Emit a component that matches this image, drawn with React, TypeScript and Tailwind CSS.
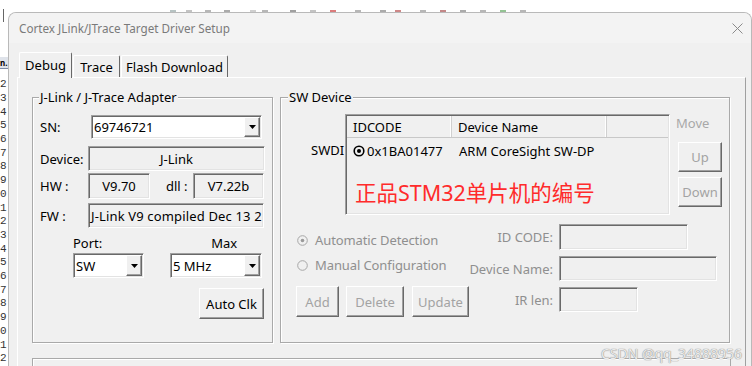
import React from "react";

const raised =
  "border border-t-white border-l-white border-r-[#696969] border-b-[#696969] shadow-[inset_-1px_-1px_0_#a0a0a0]";
const sunken =
  "border border-t-[#a0a0a0] border-l-[#a0a0a0] border-r-white border-b-white shadow-[inset_1px_1px_0_#696969,inset_-1px_-1px_0_#e3e3e3]";

function Arrow() {
  return (
    <svg width="7" height="4" viewBox="0 0 7 4">
      <polygon points="0,0 7,0 3.5,4" fill="#000" />
    </svg>
  );
}

function Combo({ value, w }: { value: string; w: string }) {
  return (
    <div className={`flex h-full ${w} bg-white ${sunken} p-[1px]`}>
      <div className="flex-1 flex items-center pl-[1px] whitespace-nowrap">{value}</div>
      <div className={`w-[16px] bg-[#f0f0f0] flex items-center justify-center ${raised}`}>
        <Arrow />
      </div>
    </div>
  );
}

function Field({ w, children, left }: { w: string; children?: React.ReactNode; left?: boolean }) {
  return (
    <div
      className={`h-full ${w} ${sunken} bg-[#f0f0f0] flex items-center overflow-hidden whitespace-nowrap ${
        left ? "pl-[2px]" : "justify-center"
      }`}
    >
      {children}
    </div>
  );
}

function Btn({ w, h, children, disabled }: { w: string; h: string; children: React.ReactNode; disabled?: boolean }) {
  return (
    <div
      className={`${w} ${h} ${raised} bg-[#f0f0f0] flex items-center justify-center ${
        disabled ? "text-[#a3a3a3]" : "text-black"
      }`}
    >
      {children}
    </div>
  );
}

function Radio({ checked, label }: { checked?: boolean; label: string }) {
  return (
    <div className="flex items-center h-[16px] text-[#8f8f8f]">
      <svg width="11" height="11" viewBox="0 0 11 11" className="ml-[1px]">
        <circle cx="5.5" cy="5.5" r="4.8" fill="#f0f0f0" stroke="#a6a6a6" strokeWidth="1" />
        {checked && <circle cx="5.5" cy="5.5" r="1.8" fill="#9a9a9a" />}
      </svg>
      <span className="ml-[7px] tracking-[-0.1px]">{label}</span>
    </div>
  );
}

function LeftStrip() {
  const digits = "234567890123456789012".split("");
  return (
    <div className="w-[8px] h-full shrink-0 flex flex-col overflow-hidden bg-white">
      <div className="h-[10px]" />
      <div className="ml-[3px] w-px h-[15px] bg-[#666]" />
      <div className="mt-[35px] h-[12px] bg-[#dfe3ea] border-b border-[#7d8aa6] text-[8px] font-bold leading-[11px] whitespace-nowrap">
        n.
      </div>
      <div className="mt-[9px] flex flex-col font-['Liberation_Mono',monospace] text-[11px] leading-[13.7px] text-[#333]">
        {digits.map((d, i) => (
          <span key={i}>{d}</span>
        ))}
      </div>
    </div>
  );
}

function TopStrip() {
  const marks = [
    [170, "#9aa"], [186, "#aaa"], [205, "#999"], [224, "#888"], [250, "#bbb"], [262, "#999"],
    [290, "#777"], [310, "#aaa"], [330, "#c44"], [355, "#999"], [380, "#888"], [395, "#b55"],
    [420, "#999"], [440, "#a55"], [460, "#888"], [480, "#999"], [500, "#6a6"], [520, "#999"],
  ] as const;
  return (
    <div className="h-[12px] shrink-0 bg-white">
      <svg width="744" height="12">
        {marks.map(([x, c], i) => (
          <rect key={i} x={x - 8} y={10} width={6} height={2} fill={c} opacity={0.7} />
        ))}
      </svg>
    </div>
  );
}

export default function App() {
  return (
    <div className="w-[752px] h-[366px] overflow-hidden bg-white flex font-['Noto_Sans',sans-serif] text-[13px] leading-[16px] text-black">
      <LeftStrip />
      <div className="flex flex-col w-[744px]">
        <TopStrip />
        <div className="relative flex-1 flex flex-col rounded-t-[8px] border border-b-0 border-[#b9b9b9] bg-[#f0f0f0] overflow-hidden">
          {/* title bar */}
          <div className="h-[30px] shrink-0 bg-[#f3f3f3] flex items-center justify-between pl-[10px] pr-[8px]">
            <span className="text-[11.7px] text-[#7a7a7a]">Cortex JLink/JTrace Target Driver Setup</span>
            <svg width="11" height="11" viewBox="0 0 11 11">
              <path d="M0.5 0.5 L10.5 10.5 M10.5 0.5 L0.5 10.5" stroke="#8a8a8a" strokeWidth="1" />
            </svg>
          </div>

          {/* tabs */}
          <div className="h-[34px] shrink-0 flex items-end pl-[10px]">
            <div className="relative z-10 mb-[-1px] h-[26px] w-[53px] bg-[#f0f0f0] border-t border-l border-r border-t-white border-l-white border-r-[#696969] rounded-t-[2px] flex items-center justify-center pb-[2px]">
              Debug
            </div>
            <div className="h-[22px] w-[47px] ml-[1px] border-t border-l border-r border-t-white border-l-white border-r-[#696969] rounded-t-[2px] flex items-center justify-center">
              Trace
            </div>
            <div className="h-[22px] w-[107px] ml-[1px] border-t border-l border-r border-t-white border-l-white border-r-[#696969] rounded-t-[2px] flex items-center justify-center">
              Flash Download
            </div>
          </div>

          {/* tab panel */}
          <div className="flex-1 ml-[8px] w-[729px] border-t border-l border-r border-t-white border-l-white border-r-[#a0a0a0] pt-[11px] pl-[14px] flex flex-col">
            <div className="flex gap-[7px]">
              {/* J-Link adapter group */}
              <fieldset className="w-[241px] h-[254px] border border-[#a9a9a9] shadow-[inset_1px_1px_0_#fff,1px_1px_0_#fff]">
                <legend className="ml-[6px] px-[1px] bg-[#f0f0f0]">J-Link / J-Trace Adapter</legend>
                <div className="pl-[7px] flex flex-col">
                  <div className="mt-[10px] h-[24px] flex items-center">
                    <span className="w-[51px]">SN:</span>
                    <Combo value="69746721" w="w-[171px]" />
                  </div>
                  <div className="mt-[7px] h-[25px] flex items-center">
                    <span className="w-[48px]">Device:</span>
                    <Field w="w-[177px]">J-Link</Field>
                  </div>
                  <div className="mt-[2px] h-[26px] flex items-center">
                    <span className="w-[48px]">HW :</span>
                    <Field w="w-[62px]">V9.70</Field>
                    <span className="ml-[16px] w-[27px]">dll :</span>
                    <Field w="w-[71px]">V7.22b</Field>
                  </div>
                  <div className="mt-[4px] h-[25px] flex items-center">
                    <span className="w-[48px]">FW :</span>
                    <Field w="w-[176px]" left>
                      <span className="tracking-[0.15px]">J-Link V9 compiled Dec 13 2</span>
                    </Field>
                  </div>
                  <div className="mt-[7px] h-[16px] flex">
                    <span className="ml-[33px]">Port:</span>
                    <span className="ml-[109px]">Max</span>
                  </div>
                  <div className="mt-[2px] h-[25px] flex">
                    <div className="ml-[33px] flex">
                      <Combo value="SW" w="w-[71px]" />
                    </div>
                    <div className="ml-[26px] flex">
                      <Combo value="5 MHz" w="w-[92px]" />
                    </div>
                  </div>
                  <div className="mt-[10px] ml-[159px]">
                    <Btn w="w-[65px]" h="h-[31px]">Auto Clk</Btn>
                  </div>
                </div>
              </fieldset>

              {/* SW Device group */}
              <fieldset className="w-[450px] h-[254px] border border-[#a9a9a9] shadow-[inset_1px_1px_0_#fff,1px_1px_0_#fff]">
                <legend className="ml-[7px] px-[1px] bg-[#f0f0f0]">SW Device</legend>
                <div className="mt-[9px] flex">
                  <div className="ml-[30px] w-[34px] whitespace-nowrap mt-[28px] h-[16px]">SWDI</div>
                  <div className={`w-[325px] h-[101px] ${sunken} p-[1px] flex flex-col overflow-hidden`}>
                    <div className="h-[22px] flex shrink-0 border-b border-[#c8c8c8]">
                      <div className="w-[105px] border-r border-r-[#d0d0d0] shadow-[inset_-1px_0_0_#fff] flex items-center pl-[6px]">
                        IDCODE
                      </div>
                      <div className="w-[155px] border-r border-r-[#d0d0d0] shadow-[inset_-1px_0_0_#fff] flex items-center pl-[6px]">
                        Device Name
                      </div>
                      <div className="flex-1" />
                    </div>
                    <div className="mt-[4px] h-[17px] flex items-center">
                      <div className="w-[105px] flex items-center pl-[6px]">
                        <svg width="12" height="12" viewBox="0 0 12 12">
                          <circle cx="6" cy="6" r="4.8" fill="none" stroke="#000" strokeWidth="1.6" />
                          <circle cx="6" cy="6" r="2" fill="#000" />
                        </svg>
                        <span className="ml-[2px]">0x1BA01477</span>
                      </div>
                      <div className="pl-[7px] whitespace-nowrap">ARM CoreSight SW-DP</div>
                    </div>
                    <div className="mt-[20px] pl-[8px] text-[21.5px] leading-[28px] text-[#ff2b2b] font-['Noto_Sans','Noto_Sans_CJK_SC',sans-serif] whitespace-nowrap">
                      正品STM32单片机的编号
                    </div>
                  </div>
                  <div className="ml-[6px] flex flex-col">
                    <div className="mt-[1px] h-[16px] text-[#a8a8a8]">Move</div>
                    <div className="mt-[11px] ml-[2px]">
                      <Btn w="w-[44px]" h="h-[30px]" disabled>
                        Up
                      </Btn>
                    </div>
                    <div className="mt-[5px] ml-[2px]">
                      <Btn w="w-[44px]" h="h-[30px]" disabled>
                        Down
                      </Btn>
                    </div>
                  </div>
                </div>

                <div className="flex">
                  <div className="ml-[15px] w-[173px] flex flex-col mt-[17px]">
                    <Radio checked label="Automatic Detection" />
                    <div className="mt-[9px]">
                      <Radio label="Manual Configuration" />
                    </div>
                    <div className="mt-[13px] flex">
                      <Btn w="w-[58px]" h="h-[31px]" disabled>
                        Add
                      </Btn>
                      <div className="ml-[7px]">
                        <Btn w="w-[58px]" h="h-[31px]" disabled>
                          Delete
                        </Btn>
                      </div>
                      <div className="ml-[8px]">
                        <Btn w="w-[57px]" h="h-[31px]" disabled>
                          Update
                        </Btn>
                      </div>
                    </div>
                  </div>
                  <div className="mt-[9px] flex flex-col text-[#8f8f8f]">
                    <div className="h-[26px] flex items-center">
                      <span className="w-[84px] text-right whitespace-nowrap">ID CODE:</span>
                      <div className="ml-[6px] h-full flex">
                        <Field w="w-[129px]" />
                      </div>
                    </div>
                    <div className="mt-[6px] h-[25px] flex items-center">
                      <span className="w-[84px] text-right whitespace-nowrap">Device Name:</span>
                      <div className="ml-[6px] h-full flex">
                        <Field w="w-[158px]" />
                      </div>
                    </div>
                    <div className="mt-[6px] h-[25px] flex items-center">
                      <span className="w-[84px] text-right whitespace-nowrap">IR len:</span>
                      <div className="ml-[6px] h-full flex">
                        <Field w="w-[79px]" />
                      </div>
                    </div>
                  </div>
                </div>
              </fieldset>
            </div>

            <div className="mt-[15px] w-[699px] h-[20px] border-t border-l border-r border-[#a9a9a9] shadow-[inset_1px_1px_0_#fff]" />
          </div>

          <div className="absolute right-[9px] top-[333px] text-[14px] text-[#ececec] [text-shadow:0_0_1px_#8e8e8e,0_0_1px_#8e8e8e] whitespace-nowrap">
            CSDN @qq_34888956
          </div>
        </div>
      </div>
    </div>
  );
}
